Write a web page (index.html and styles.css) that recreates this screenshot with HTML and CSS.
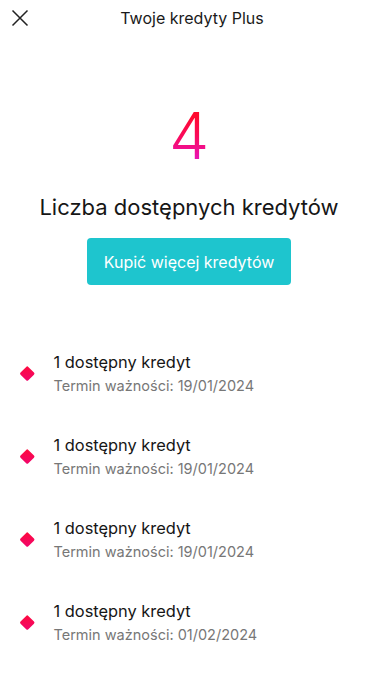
FILE: index.html
```html
<!DOCTYPE html>
<html lang="pl">
<head>
<meta charset="utf-8">
<link rel="stylesheet" href="styles.css">
</head>
<body>
<div class="page">
  <header class="topbar">
    <button class="close" aria-label="Zamknij">
      <svg width="18" height="18" viewBox="0 0 18 18"><path d="M1.5 1.5 L16.5 16.5 M16.5 1.5 L1.5 16.5" stroke="#222" stroke-width="1.5" fill="none"/></svg>
    </button>
    <h1 class="title">Twoje kredyty Plus</h1>
    <span></span>
  </header>
  <section class="summary">
    <div class="count">4</div>
    <div class="label">Liczba dostępnych kredytów</div>
    <button class="buy">Kupić więcej kredytów</button>
  </section>
  <ul class="list">
    <li class="item"><span class="dot"></span><div class="text"><div class="name">1 dostępny kredyt</div><div class="exp">Termin ważności: 19/01/2024</div></div></li>
    <li class="item"><span class="dot"></span><div class="text"><div class="name">1 dostępny kredyt</div><div class="exp">Termin ważności: 19/01/2024</div></div></li>
    <li class="item"><span class="dot"></span><div class="text"><div class="name">1 dostępny kredyt</div><div class="exp">Termin ważności: 19/01/2024</div></div></li>
    <li class="item"><span class="dot"></span><div class="text"><div class="name">1 dostępny kredyt</div><div class="exp">Termin ważności: 01/02/2024</div></div></li>
  </ul>
</div>
</body>
</html>
```
FILE: styles.css
```css
* { box-sizing: border-box; }
html, body { margin: 0; padding: 0; background: #fff; }
body { font-family: Inter, "Noto Sans", sans-serif; color: #161616; }
.page { width: 378px; height: 690px; overflow: hidden; }
.topbar {
  display: grid;
  grid-template-columns: 44px 1fr 44px;
  align-items: center;
  height: 36px;
}
.close {
  border: 0; background: none; padding: 0 0 0 11px; margin: 0;
  display: flex; align-items: center; height: 36px; cursor: pointer;
}
.title {
  margin: 0; font-size: 16px; font-weight: 400; text-align: center;
  color: #1a1a1a; padding-left: 6px;
}
.summary {
  display: flex; flex-direction: column; align-items: center;
  padding-top: 68px;
}
.count {
  font-size: 64px; line-height: 64px; font-weight: 350;
  background: linear-gradient(180deg, #ff0a2a 0%, #ff0a30 20%, #fa0a5a 50%, #ec12a8 80%, #e01cd0 100%);
  -webkit-background-clip: text; background-clip: text; color: transparent;
}
.label {
  margin-top: 24px; font-size: 22px; line-height: 30px; color: #161616;
}
.buy {
  margin-top: 16px; width: 204px; height: 47px;
  border: 0; border-radius: 4px; background: #1ec5ce; color: #fff;
  font-family: inherit; font-size: 16px; font-weight: 400;
}
.list { list-style: none; margin: 0; padding: 55px 0 0 20px; }
.item {
  display: flex; align-items: center; height: 83px; padding-bottom: 17px;
}
.dot {
  width: 10.5px; height: 10.5px; margin: 0 21px 0 2px; border-radius: 1.5px;
  transform: rotate(45deg);
  background: linear-gradient(135deg, #ff0a3c, #f0066e);
  flex: none;
}
.name { font-size: 16.4px; line-height: 22px; color: #161616; }
.exp { font-size: 14.5px; line-height: 20px; color: #777; margin-top: 3px; }
```
